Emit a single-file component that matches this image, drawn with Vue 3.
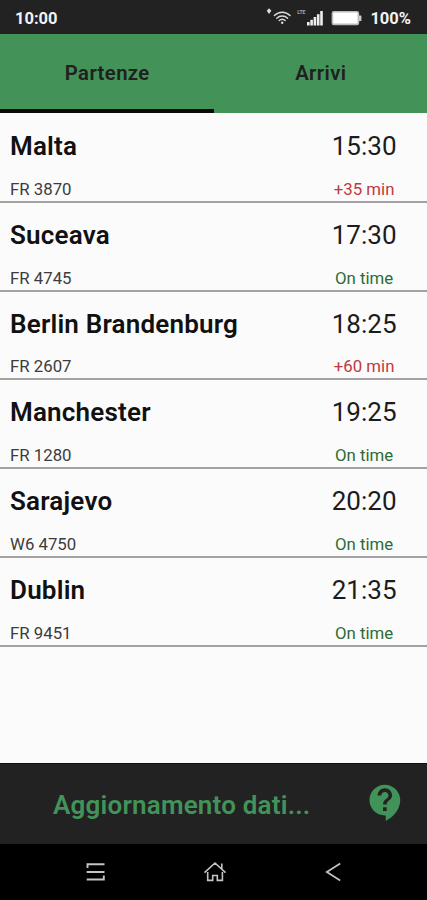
<template>
  <div class="screen">
    <header class="status">
      <span class="status__time">10:00</span>
      <div class="status__icons">
        <svg width="26" height="20" viewBox="0 0 26 20" fill="none">
          <path d="M3 0.3L5.4 2.8 3 6 0.8 2.8z" fill="#ddd" />
          <g stroke="#ddd" stroke-width="1.4" stroke-linecap="round">
            <path d="M8.4 7.5C12.8 3.1 19.6 3.1 24 7.5" />
            <path d="M10.8 10.2C13.8 7.3 18.6 7.3 21.6 10.2" />
            <path d="M13.2 12.6C14.9 11 17.5 11 19.2 12.6" />
          </g>
          <circle cx="16.2" cy="14.8" r="1.2" fill="#ddd" />
        </svg>
        <span class="status__lte">LTE</span>
        <svg class="status__signal" width="16" height="16" viewBox="0 0 16 16" fill="#eee">
          <rect x="0" y="12" width="2.6" height="3.5" />
          <rect x="3.3" y="9.8" width="2.6" height="5.7" />
          <rect x="6.6" y="7" width="2.6" height="8.5" />
          <rect x="9.9" y="4.2" width="2.6" height="11.3" />
          <rect x="13.2" y="1" width="2.6" height="14.5" />
        </svg>
        <svg class="status__battery" width="31" height="15" viewBox="0 0 31 15">
          <rect x="1.4" y="0.8" width="26" height="12.6" rx="1.5" fill="#fff" stroke="#bbb" stroke-width="1.6" />
          <rect x="28" y="4.5" width="2.4" height="5.6" rx="0.6" fill="#ccc" />
        </svg>
        <span class="status__percent">100%</span>
      </div>
    </header>

    <nav class="tabs">
      <button
        v-for="(tab, i) in tabs"
        :key="tab"
        class="tabs__item"
        :class="{ active: current === i }"
        @click="current = i"
      >{{ tab }}</button>
    </nav>

    <main class="list">
      <div v-for="flight in flights" :key="flight.code" class="flight">
        <div class="flight__info">
          <span class="flight__city">{{ flight.city }}</span>
          <span class="flight__code">{{ flight.code }}</span>
        </div>
        <div class="flight__when">
          <span class="flight__time">{{ flight.time }}</span>
          <span class="flight__status" :class="{ late: flight.delay }">
            {{ flight.delay ? `+${flight.delay} min` : 'On time' }}
          </span>
        </div>
      </div>
    </main>

    <footer class="bottom">
      <span class="bottom__text">Aggiornamento dati...</span>
      <svg class="bottom__help" width="43.5" height="43.5" viewBox="0 0 24 24" fill="#429359">
        <path d="M11.5 2C6.81 2 3 5.81 3 10.5S6.81 19 11.5 19h.5v3c4.86-2.34 8-7 8-11.5C20 5.81 16.19 2 11.5 2zm1 14.5h-2v-2h2v2zm0-3.5h-2c0-3.25 3-3 3-5 0-1.1-.9-2-2-2s-2 .9-2 2h-2c0-2.21 1.79-4 4-4s4 1.79 4 4c0 2.5-3 2.75-3 5z" />
      </svg>
    </footer>

    <div class="system">
      <svg width="24" height="24" viewBox="0 0 24 24" fill="none" stroke="#c4c4c4" stroke-width="1.9">
        <path d="M20.5 4.2H3.5V8M2.7 12H20.5M2.7 19.5H19.8V15.5" />
      </svg>
      <svg width="24" height="24" viewBox="0 0 24 24" fill="none" stroke="#c4c4c4" stroke-width="1.6">
        <path d="M1.5 12.6L12 3 22.5 12.6M4.7 12V20.4H9.7V15.5H14.3V20.4H19.4V12M18.8 3.5V9" />
      </svg>
      <svg width="24" height="24" viewBox="0 0 24 24" fill="none" stroke="#c4c4c4" stroke-width="1.7">
        <path d="M19.2 3.5L5.8 12 19.2 20.5" />
      </svg>
    </div>
  </div>
</template>

<script setup>
import { ref } from 'vue';

const tabs = ['Partenze', 'Arrivi'];
const current = ref(0);

const flights = [
  { city: 'Malta', code: 'FR 3870', time: '15:30', delay: 35 },
  { city: 'Suceava', code: 'FR 4745', time: '17:30', delay: 0 },
  { city: 'Berlin Brandenburg', code: 'FR 2607', time: '18:25', delay: 60 },
  { city: 'Manchester', code: 'FR 1280', time: '19:25', delay: 0 },
  { city: 'Sarajevo', code: 'W6 4750', time: '20:20', delay: 0 },
  { city: 'Dublin', code: 'FR 9451', time: '21:35', delay: 0 },
];
</script>

<style>
body {
  margin: 0;
}
</style>

<style scoped>
.screen {
  display: flex;
  flex-direction: column;
  width: 100%;
  height: 100vh;
  background: #fbfbfb;
  font-family: Roboto, sans-serif;
  overflow: hidden;
}

.status {
  display: flex;
  flex: none;
  justify-content: space-between;
  align-items: center;
  box-sizing: border-box;
  height: 34px;
  padding: 2px 16px 0 15px;
  background: #222;
  color: #f2f2f2;
  font-size: 16.5px;
  font-weight: 700;
}

.status__icons {
  display: flex;
  align-items: center;
}

.status__lte {
  align-self: flex-start;
  margin: 0 1px 0 5px;
  color: #aaa;
  font-size: 5px;
  line-height: 9px;
}

.status__signal {
  margin-left: 1px;
}

.status__battery {
  margin: 0 8px 0 8px;
}

.tabs {
  display: flex;
  flex: none;
  height: 79px;
  background: #439359;
}

.tabs__item {
  flex: 1;
  padding: 2px 0 0 1px;
  border: 0;
  border-bottom: 4px solid transparent;
  background: none;
  color: #202020;
  font-family: inherit;
  font-size: 20.3px;
  font-weight: 600;
  letter-spacing: 0.4px;
  cursor: pointer;
}

.tabs__item.active {
  border-bottom-color: #0b0b0b;
}

.list {
  flex: 1;
  padding-top: 1px;
}

.flight {
  display: flex;
  justify-content: space-between;
  box-sizing: border-box;
  height: 88.8px;
  padding: 14px 30.5px 0 10px;
  border-bottom: 2px solid #a3a3a3;
}

.flight__info,
.flight__when {
  display: flex;
  flex-direction: column;
}

.flight__when {
  align-items: center;
}

.flight__city {
  color: #111;
  font-size: 26px;
  font-weight: 600;
  line-height: 36px;
  letter-spacing: 0.2px;
}

.flight__time {
  color: #1c1c1c;
  font-size: 26px;
  line-height: 36px;
}

.flight__code,
.flight__status {
  margin-top: 14.8px;
  color: #3c3c3c;
  font-size: 16.8px;
  line-height: 20px;
}

.flight__status {
  color: #2d6b35;
}

.flight__status.late {
  color: #bd3a40;
}

.bottom {
  display: flex;
  flex: none;
  align-items: center;
  box-sizing: border-box;
  height: 81px;
  padding-right: 20px;
  border-top: 1px solid #111;
  background: #222;
}

.bottom__text {
  flex: 1;
  padding-top: 1px;
  color: #429359;
  font-size: 26px;
  font-weight: 600;
  letter-spacing: 0.2px;
  text-align: center;
}

.bottom__help {
  flex: none;
  margin-bottom: 2px;
}

.system {
  display: flex;
  flex: none;
  justify-content: space-between;
  align-items: center;
  box-sizing: border-box;
  height: 56px;
  padding: 0 82px 0 84px;
  background: #000;
}
</style>
